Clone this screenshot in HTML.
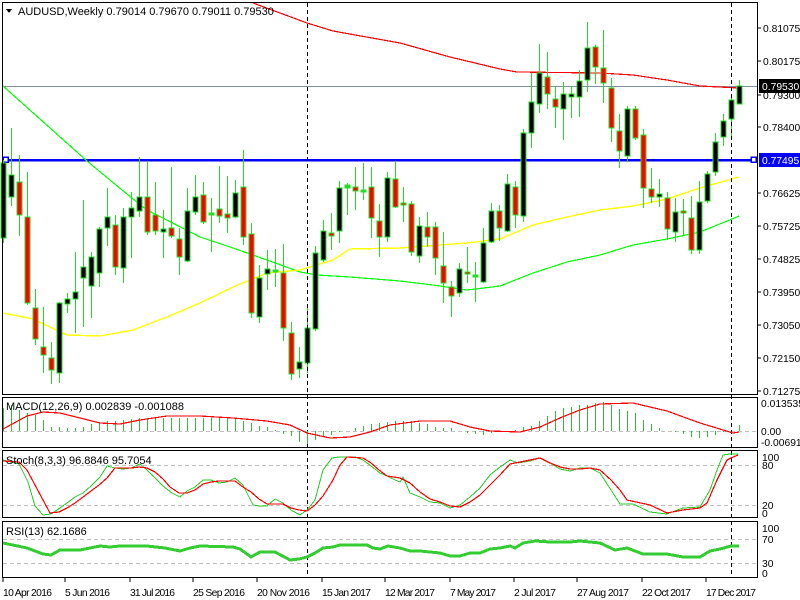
<!DOCTYPE html>
<html><head><meta charset="utf-8"><style>
html,body{margin:0;padding:0;background:#fff;width:800px;height:600px;overflow:hidden}
svg{display:block}
text{font-family:"Liberation Sans",sans-serif;font-size:11px;fill:#000}
text.a{font-size:10.3px}
</style></head><body>
<svg id="s" width="800" height="600" xmlns="http://www.w3.org/2000/svg" shape-rendering="crispEdges">
<rect width="800" height="600" fill="#fff"/>
<g id="g"></g>
<g stroke="#000" stroke-width="1" fill="none">
<rect x="2.5" y="2.5" width="755" height="392"/>
<rect x="2.5" y="397.5" width="755" height="50"/>
<rect x="2.5" y="450.5" width="755" height="67"/>
<rect x="2.5" y="521.5" width="755" height="56"/>
</g>
<polygon points="6,9 12,9 9,13" fill="#000"/>
<text x="18" y="15">AUDUSD,Weekly  0.79014 0.79670 0.79011 0.79530</text>
<text x="6" y="410">MACD(12,26,9) 0.002839 -0.001088</text>
<text x="6" y="464">Stoch(8,3,3) 96.8846 95.7054</text>
<text x="6" y="535">RSI(13) 62.1686</text>
<g stroke="#000"><line x1="757" y1="28" x2="761" y2="28"/><line x1="757" y1="61" x2="761" y2="61"/><line x1="757" y1="95" x2="761" y2="95"/><line x1="757" y1="127" x2="761" y2="127"/><line x1="757" y1="193" x2="761" y2="193"/><line x1="757" y1="226" x2="761" y2="226"/><line x1="757" y1="259" x2="761" y2="259"/><line x1="757" y1="292" x2="761" y2="292"/><line x1="757" y1="325" x2="761" y2="325"/><line x1="757" y1="358" x2="761" y2="358"/><line x1="757" y1="391" x2="761" y2="391"/></g>
<text class="a" x="763" y="32">0.81075</text>
<text class="a" x="763" y="65">0.80175</text>
<text class="a" x="763" y="99">0.79300</text>
<text class="a" x="763" y="131">0.78400</text>
<text class="a" x="763" y="197">0.76625</text>
<text class="a" x="763" y="230">0.75725</text>
<text class="a" x="763" y="263">0.74825</text>
<text class="a" x="763" y="296">0.73950</text>
<text class="a" x="763" y="329">0.73050</text>
<text class="a" x="763" y="362">0.72150</text>
<text class="a" x="763" y="395">0.71275</text>
<rect x="759" y="79" width="41" height="14" fill="#000"/>
<text class="a" x="762" y="90" style="fill:#fff">0.79530</text>
<rect x="759" y="153" width="41" height="14" fill="#0000ff"/>
<text class="a" x="762" y="164" style="fill:#fff">0.77495</text>
<text class="a" x="761" y="407">0.013535</text>
<text class="a" x="761" y="435">0.00</text>
<text class="a" x="761" y="446">-0.006916</text>
<text class="a" x="762" y="461">100</text>
<text class="a" x="762" y="469">80</text>
<text class="a" x="762" y="509">20</text>
<text class="a" x="762" y="517">0</text>
<text class="a" x="762" y="532">100</text>
<text class="a" x="762" y="543">70</text>
<text class="a" x="762" y="567">30</text>
<text class="a" x="762" y="577">0</text>
<g stroke="#000"><line x1="3" y1="578" x2="3" y2="582"/><line x1="65" y1="578" x2="65" y2="582"/><line x1="130" y1="578" x2="130" y2="582"/><line x1="193" y1="578" x2="193" y2="582"/><line x1="257" y1="578" x2="257" y2="582"/><line x1="322" y1="578" x2="322" y2="582"/><line x1="385" y1="578" x2="385" y2="582"/><line x1="450" y1="578" x2="450" y2="582"/><line x1="514" y1="578" x2="514" y2="582"/><line x1="577" y1="578" x2="577" y2="582"/><line x1="642" y1="578" x2="642" y2="582"/><line x1="706" y1="578" x2="706" y2="582"/></g>
<text class="a" x="3" y="596" textLength="49">10 Apr 2016</text>
<text class="a" x="65" y="596" textLength="45">5 Jun 2016</text>
<text class="a" x="130" y="596" textLength="45">31 Jul 2016</text>
<text class="a" x="193" y="596" textLength="52">25 Sep 2016</text>
<text class="a" x="257" y="596" textLength="53">20 Nov 2016</text>
<text class="a" x="322" y="596" textLength="49">15 Jan 2017</text>
<text class="a" x="385" y="596" textLength="50">12 Mar 2017</text>
<text class="a" x="450" y="596" textLength="46">7 May 2017</text>
<text class="a" x="514" y="596" textLength="42">2 Jul 2017</text>
<text class="a" x="577" y="596" textLength="52">27 Aug 2017</text>
<text class="a" x="642" y="596" textLength="49">22 Oct 2017</text>
<text class="a" x="706" y="596" textLength="50">17 Dec 2017</text>
</svg>
<script>
var g=document.getElementById('g'),NS='http://www.w3.org/2000/svg';
function el(t,a){var e=document.createElementNS(NS,t);for(var k in a)e.setAttribute(k,a[k]);g.appendChild(e);return e;}
function pl(pts,c,w,extra){var a={points:pts.map(function(p){return p.join(',')}).join(' '),fill:'none',stroke:c,'stroke-width':w};if(extra)for(var k in extra)a[k]=extra[k];el('polyline',a);}
function pairs(a){var r=[];for(var i=0;i<a.length;i+=2)r.push([a[i],a[i+1]]);return r;}
[431,465,505,539,563].forEach(function(y){el('line',{x1:3,x2:757,y1:y+.5,y2:y+.5,stroke:'#c0c0c0',"stroke-dasharray":'4,3'});});
el('line',{x1:3,x2:757,y1:86.5,y2:86.5,stroke:'#8090a0'});
el('line',{x1:3,x2:757,y1:160,y2:160,stroke:'#0000ff','stroke-width':2.5});
el('rect',{x:3,y:157,width:5,height:5,fill:'#fff',stroke:'#0000ff','stroke-width':1.5});
el('rect',{x:751,y:157,width:5,height:5,fill:'#fff',stroke:'#0000ff','stroke-width':1.5});
var C=[[1,163,238,160,243],[1,175,197,128,206],[0,182,215,155,236],[0,217,303,172,305],[0,308,339,289,345],[0,347,355,307,373],[0,358,370,342,384],[1,303,373,302,383],[1,299,304,293,313],[1,292,299,252,333],[1,267,278,200,327],[1,257,286,252,318],[1,229,273,227,287],[1,217,228,188,246],[0,225,267,215,275],[1,217,268,208,283],[1,208,217,192,258],[1,197,211,157,217],[0,197,232,161,235],[0,215,231,182,235],[1,229,232,210,258],[0,228,236,167,238],[0,239,257,228,275],[1,211,261,188,262],[1,197,212,175,215],[0,195,222,182,224],[2,214,214,198,252],[0,209,216,166,223],[0,214,218,176,233],[1,193,217,180,218],[0,187,237,150,245],[0,234,313,223,318],[1,278,317,265,323],[1,269,274,250,290],[2,271,271,249,287],[0,273,328,244,341],[0,333,374,322,380],[1,362,369,347,378],[1,328,363,307,373],[1,253,329,246,331],[1,231,260,220,262],[0,233,236,213,250],[1,188,231,181,243],[2,186,187,183,215],[0,187,191,167,210],[2,191,191,163,200],[0,187,218,167,238],[0,221,237,204,257],[1,178,237,172,242],[0,179,207,161,208],
[0,203,205,187,222],[0,204,252,201,256],[1,226,256,217,263],[0,227,237,212,247],[0,227,258,222,275],[0,266,283,232,303],[0,287,296,281,317],[1,269,293,263,297],[0,272,274,247,283],[2,276,276,262,302],[1,243,282,228,283],[1,211,242,203,243],[0,211,228,205,241],[1,184,231,174,232],[0,187,215,181,228],[1,133,216,129,222],[1,102,133,73,148],[1,73,104,44,113],[0,77,94,52,109],[0,99,107,87,128],[1,94,109,82,140],[1,94,97,86,118],[1,81,97,70,117],[1,48,80,22,92],[0,47,67,45,84],[0,68,83,30,103],[0,88,128,78,142],[0,131,151,114,168],[1,109,156,106,162],[0,109,138,106,140],[0,135,188,129,208],[0,189,197,168,203],[1,194,197,179,207],[0,198,229,192,240],[1,212,232,198,242],[0,211,213,199,235],[0,218,250,196,254],[1,202,250,181,254],[1,174,201,171,203],[1,142,172,133,176],[1,121,137,114,146],[1,100,119,96,139],[1,86,104,80,104]];
pl(pairs([253,3,307,23,333,31,400,43,450,57,500,69,517,72,600,73,633,75,667,80,700,86,739,88]),'#ff0000',1.2);
pl(pairs([3,86,87,161,133,199,147,210,200,237,233,248,267,260,300,272,317,275,350,277,400,281,433,285,467,290,500,286,533,273,567,262,600,255,633,245,667,239,700,232,732,219,739,216]),'#00ff00',1.2);
pl(pairs([3,313,33,319,67,335,100,336,133,330,167,317,200,303,233,287,267,273,300,270,333,260,350,249,400,248,467,243,500,239,533,225,567,217,600,210,633,206,667,199,700,188,739,177]),'#ffff00',1.4);
var G='#22dd22';
C.forEach(function(c,k){var x=3+8*k;
 el('line',{x1:x+.5,x2:x+.5,y1:c[3],y2:c[4],stroke:G});
 if(c[0]==2||c[2]-c[1]<2){el('rect',{x:x-2,y:c[1]-1,width:5,height:Math.max(2,c[2]-c[1]+2),fill:c[0]==0?'#ff0000':(c[0]==1?'#000':G),stroke:G,'stroke-width':1});}
 else el('rect',{x:x-2,y:c[1],width:5,height:c[2]-c[1],fill:c[0]==0?'#ff0000':'#000',stroke:G,'stroke-width':1});
});
[307,731].forEach(function(x){el('line',{x1:x+.5,x2:x+.5,y1:3,y2:578,stroke:'#000','stroke-dasharray':'4,3'});});
var H=[408,405,410,413,415,420,427,427,428,428,427,424,422,421,421,420,419,418,418,418,418,418,418,418,418,418,418,418,418,419,421,423,426,427,430,434,436,442,444,440,437,435,432,431,428,426,424,423,422,421,421,421,423,424,427,428,428,431,433,434,435,433,432,431,430,427,426,421,416,411,408,407,405,405,403,401,401,402,405,409,411,413,420,424,428,431,432,434,437,438,437,435,425];
var R={75:402,76:405,77:409,78:411,79:413,80:420,81:424,82:428,83:431,84:432,85:434,86:437,87:438,88:437,89:435,90:432,91:431,92:425};
for(var k in R)H[k]=R[k];
H.forEach(function(t,k){var x=3+8*k+.5;if(Math.abs(t-431)<1)return;el('line',{x1:x,x2:x,y1:431,y2:t,stroke:'#33bb33'});});
pl(pairs([3,429,27,416,43,412,60,413,80,418,100,423,120,424,140,420,167,416,200,416,233,418,267,421,290,425,307,433,330,438,350,437,370,432,390,425,420,421,450,421,470,427,490,431,520,432,540,427,560,418,580,410,600,404,633,403,667,411,700,423,733,433,739,432]),'#ff0000',1.2);
pl(pairs([3,460,19,464,28,482,35,506,43,515,51,514,60,508,67,503,75,497,83,493,91,486,100,477,107,466,115,468,123,469,131,468,140,464,147,470,155,478,163,486,172,493,180,497,187,491,195,487,203,480,211,480,219,483,227,482,235,478,243,485,253,505,259,506,267,506,275,499,283,503,291,510,300,515,307,510,315,500,323,470,332,458,339,457,347,457,355,457,363,460,371,466,380,473,387,476,395,480,400,482,403,477,410,493,420,497,430,502,440,503,450,508,460,505,470,497,480,488,490,475,500,467,510,460,518,463,530,461,540,458,550,463,560,469,570,471,580,468,590,468,600,473,611,490,620,504,633,504,650,512,667,514,683,508,700,507,710,490,717,470,723,455,730,454,738,454]),'#22cc22',1);
pl(pairs([3,461,19,462,27,470,35,485,43,500,50,513,59,512,67,508,75,503,83,497,91,491,99,485,107,478,115,468,123,468,131,468,139,467,147,468,155,472,163,479,170,487,179,493,187,493,195,490,203,484,211,482,219,481,235,481,243,487,251,492,259,499,267,504,283,504,291,508,299,510,307,511,315,505,323,496,333,480,340,465,347,457,363,458,371,463,379,470,387,476,400,478,410,483,420,492,430,499,440,502,450,506,460,507,470,502,480,495,490,485,500,475,510,464,520,462,530,460,540,458,550,463,560,467,570,469,580,469,590,468,600,470,611,480,620,490,627,500,650,505,667,513,683,510,700,508,707,503,717,480,727,460,731,458,738,455]),'#ff0000',1.2);
pl(pairs([3,543,27,548,43,554,51,555,60,550,80,550,90,548,100,546,110,547,120,546,147,546,165,548,180,551,190,548,200,546,233,547,240,549,251,557,260,552,275,552,290,560,299,559,307,557,315,553,323,548,333,547,340,545,367,545,373,548,380,549,388,546,400,548,410,551,420,551,440,553,450,556,460,556,470,553,480,553,490,549,500,548,510,546,515,548,523,543,535,541,550,542,570,542,580,541,600,543,615,550,627,548,643,554,667,554,683,557,700,557,710,551,720,549,731,546,739,546]),'#33cc33',3,{'stroke-linejoin':'round'});
</script>
</body></html>
